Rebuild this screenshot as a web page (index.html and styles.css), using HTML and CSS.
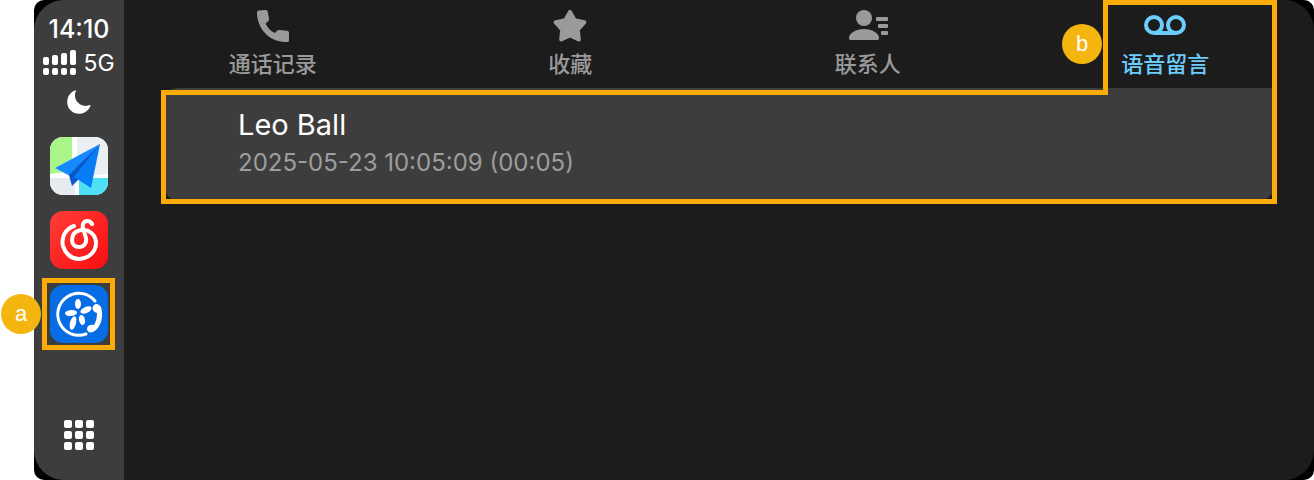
FILE: index.html
```html
<!DOCTYPE html>
<html lang="zh-CN">
<head>
    <meta charset="UTF-8">
    <meta name="viewport" content="width=device-width, initial-scale=1.0">
    <title>语音留言</title>
    <link rel="stylesheet" href="styles.css">
</head>
<body>

<div class="device">
    <!-- Status and app dock -->
    <aside class="sidebar">
        <div class="time">14:10</div>
        <div class="signal">
            <svg width="34" height="26" viewBox="0 0 34 26" fill="#fff" aria-hidden="true">
                <rect x="0" y="7" width="6" height="8" rx="2"/>
                <rect x="9" y="5" width="6" height="10" rx="2"/>
                <rect x="18" y="3" width="6" height="12" rx="2"/>
                <rect x="27" y="0" width="6" height="15" rx="2"/>
                <rect x="0" y="18" width="6" height="7" rx="2"/>
                <rect x="9" y="18" width="6" height="7" rx="2"/>
                <rect x="18" y="18" width="6" height="7" rx="2"/>
                <rect x="27" y="18" width="6" height="7" rx="2"/>
            </svg>
            <span>5G</span>
        </div>
        <svg class="moon" width="24" height="24" viewBox="0 0 24 24" aria-hidden="true">
            <path d="M8.5 .3C3.500 2 .2 6.500 .2 12c0 6.600 5.200 11.800 11.800 11.800 5.300 0 10-3.300 11.500-8.300.1-.5-.2-.7-.6-.4-6 2.600-14.300-1.500-14.900-8.600C7.800 4.300 8.200 2.500 9 .8c.2-.4-.1-.6-.5-.5z" fill="#fff"/>
        </svg>

        <nav class="dock">
            <button class="app" aria-label="地图">
                <svg width="58" height="58" viewBox="0 0 58 58">
                    <rect width="58" height="58" fill="#fff"/>
                    <path d="M0 0h22v34L0 37z" fill="#a9f587"/>
                    <path d="M27 0h31v37L27 40z" fill="#e9eff2"/>
                    <path d="M0 41h25v17H0z" fill="#e6ebf1"/>
                    <path d="M29 41h29v17H29z" fill="#4ee0f5"/>
                    <path d="M50 7L5 31l15 8z" fill="#168bff"/>
                    <path d="M50 7L19 38l3 11 7-7z" fill="#0b56c9"/>
                    <path d="M50 7L24 40l17 11z" fill="#087cf5"/>
                </svg>
            </button>
            <button class="app" aria-label="音乐">
                <svg width="58" height="58" viewBox="0 0 58 58">
                    <defs>
                        <linearGradient id="red" x1="0" y1="0" x2="1" y2="1">
                            <stop offset="0" stop-color="#ff3d37"/>
                            <stop offset="1" stop-color="#f90d10"/>
                        </linearGradient>
                    </defs>
                    <rect width="58" height="58" fill="url(#red)"/>
                    <path d="M24 15C15 18 11 27 13 35c2 7 8 13 16 13 9 0 17-7 17-16 0-9-8-14-15-13-6 1-9 5-9 10 0 4 3 7 7 7 5 0 8-4 7-9l-3-10c-1-4 1-7 4-7 2 0 4 1 5 3" fill="none" stroke="#fff" stroke-width="4" stroke-linecap="round" stroke-linejoin="round"/>
                </svg>
            </button>
            <div class="app-current">
                <button class="app" aria-label="电话">
                    <svg width="58" height="58" viewBox="0 0 58 58">
                        <rect width="58" height="58" fill="#066de5"/>
                        <path d="M45 16A21 21 0 1 0 36 49" fill="none" stroke="#fff" stroke-width="3" stroke-linecap="round"/>
                        <g fill="#fff">
                            <ellipse cx="28" cy="19" rx="3" ry="5"/>
                            <ellipse cx="21" cy="28" rx="6" ry="3" transform="rotate(-5 21 28)"/>
                            <ellipse cx="36" cy="25" rx="6" ry="3" transform="rotate(-25 36 25)"/>
                            <ellipse cx="23" cy="38" rx="3" ry="7" transform="rotate(14 23 38)"/>
                            <ellipse cx="32" cy="35" rx="3" ry="5" transform="rotate(-12 32 35)"/>
                            <path d="M44 20c2-2 5-1 7 2 3 9 0 21-8 25-3 1-6 0-6-3 0-3 3-5 7-4 2-4 3-7 3-12-4-1-6-5-3-8z"/>
                        </g>
                    </svg>
                </button>
                <span class="marker marker-a">a</span>
            </div>
        </nav>

        <button class="home" aria-label="主屏幕">
            <svg width="30" height="30" viewBox="0 0 30 30" fill="#fff">
                <rect x="0" y="0" width="8" height="8" rx="2"/>
                <rect x="11" y="0" width="8" height="8" rx="2"/>
                <rect x="22" y="0" width="8" height="8" rx="2"/>
                <rect x="0" y="11" width="8" height="8" rx="2"/>
                <rect x="11" y="11" width="8" height="8" rx="2"/>
                <rect x="22" y="11" width="8" height="8" rx="2"/>
                <rect x="0" y="22" width="8" height="8" rx="2"/>
                <rect x="11" y="22" width="8" height="8" rx="2"/>
                <rect x="22" y="22" width="8" height="8" rx="2"/>
            </svg>
        </button>
    </aside>

    <main class="content">
        <nav class="tabs">
            <button class="tab">
                <svg width="32" height="32" viewBox="0 0 32 32" fill="currentColor">
                    <path d="M2 .5L8.500 0c1.300 0 2 .6 2.300 1.700L12 9c.1 1-.2 1.800-1 2.400L8.500 13.500c1.800 4 5 7.300 9.200 9.500l2.500-2.300c.7-.7 1.500-.9 2.400-.7l7.500 .8c1.200.2 1.900 1 1.900 2.200v7.200c0 1.300-.8 1.800-2 1.800C13 32.500 0 19 0 2.500 0 1.300 .7 .6 2 .5z"/>
                </svg>
                <span>通话记录</span>
            </button>
            <button class="tab">
                <svg width="34" height="32" viewBox="0 0 34 32" fill="currentColor" stroke="currentColor" stroke-width="4" stroke-linejoin="round">
                    <path d="M17 2l4.700 8.300 9.600 2-6.500 7.300 1 9.900L17 25.400l-8.800 4.100 1-9.900-6.500-7.300 9.600-2z"/>
                </svg>
                <span>收藏</span>
            </button>
            <button class="tab">
                <svg width="40" height="32" viewBox="0 0 40 32" fill="currentColor">
                    <circle cx="16" cy="8" r="8"/>
                    <path d="M1 28c0-5 7-9 15-9s15 4 15 9c0 1.500-.6 2-2 2H3c-1.400 0-2-.5-2-2z"/>
                    <rect x="28" y="7" width="12" height="4" rx="1"/>
                    <rect x="30" y="14" width="10" height="4" rx="1"/>
                    <rect x="33" y="21" width="7" height="4" rx="1"/>
                </svg>
                <span>联系人</span>
            </button>
            <button class="tab active">
                <svg width="42" height="32" viewBox="0 0 42 32" fill="none" stroke="currentColor" stroke-width="4">
                    <circle cx="10" cy="15" r="8"/>
                    <circle cx="32" cy="15" r="8"/>
                    <path d="M10 23h22"/>
                </svg>
                <span>语音留言</span>
            </button>
        </nav>

        <ul class="messages">
            <li class="message">
                <div class="name">Leo Ball</div>
                <div class="date">2025-05-23 10:05:09 (00:05)</div>
            </li>
        </ul>

        <!-- Outline around the voicemail tab and its list -->
        <div class="outline-tab"></div>
        <div class="outline-list"></div>
        <span class="marker marker-b">b</span>
    </main>
</div>

</body>
</html>
```
FILE: styles.css
```css
* {
    box-sizing: border-box;
}

body {
    margin: 0;
    background-color: #fff;
    font-family: Inter, "Noto Sans CJK SC", sans-serif;
}

button {
    padding: 0;
    border: none;
    background: none;
    color: inherit;
    font: inherit;
    cursor: pointer;
}

svg {
    display: block;
}

.device {
    display: flex;
    min-height: 100vh;
    margin-left: 34px;
    background-color: #000;
    border-radius: 10px;
}

/* Sidebar */
.sidebar {
    display: flex;
    flex-direction: column;
    align-items: center;
    width: 90px;
    padding: 14px 0 30px;
    background-color: #3d3d3d;
    border-radius: 30px 0 0 30px;
    color: #fff;
}

.time {
    font-size: 25px;
    font-weight: 500;
    line-height: 30px;
}

.signal {
    display: flex;
    align-items: center;
    gap: 6px;
    height: 26px;
    margin-top: 6px;
    font-size: 23px;
}

.moon {
    margin-top: 14px;
}

.dock {
    display: flex;
    flex-direction: column;
    gap: 16px;
    margin-top: 23px;
}

.app {
    display: block;
    width: 58px;
    height: 58px;
    border-radius: 13px;
    overflow: hidden;
}

.app-current {
    position: relative;
}

.app-current::after {
    content: "";
    position: absolute;
    inset: -7px -7px -7px -8px;
    border: 5px solid #fcab07;
    pointer-events: none;
}

.home {
    margin-top: auto;
}

/* Main area */
.content {
    position: relative;
    flex: 1;
    background-color: #1c1c1c;
    border-radius: 0 30px 30px 0;
}

.tabs {
    display: grid;
    grid-template-columns: repeat(4, 1fr);
    height: 88px;
}

.tab {
    display: flex;
    flex-direction: column;
    align-items: center;
    gap: 6px;
    padding-top: 10px;
    color: #9a9a9a;
    font-size: 22px;
    font-weight: 500;
    line-height: 32px;
}

.tab.active {
    color: #6bcdfb;
}

.messages {
    margin: 0 40px;
    padding: 0;
    list-style: none;
}

.message {
    padding: 18px 74px;
    background-color: #3d3d3d;
    border-radius: 14px 0 14px 14px;
}

.name {
    color: #fff;
    font-size: 29px;
    line-height: 38px;
}

.date {
    color: #9d9d9d;
    font-size: 24px;
    line-height: 38px;
}

/* Callouts */
.outline-tab,
.outline-list {
    position: absolute;
    right: 37px;
    border: 5px solid #fcab07;
    pointer-events: none;
}

.outline-tab {
    top: 0;
    width: 174px;
    height: 95px;
    border-bottom: none;
}

.outline-list {
    top: 90px;
    left: 37px;
    height: 114px;
    border-top: none;
}

.outline-list::before {
    content: "";
    position: absolute;
    top: 0;
    left: 0;
    right: 164px;
    height: 5px;
    background-color: #fcab07;
}

.marker {
    position: absolute;
    width: 40px;
    height: 40px;
    border-radius: 50%;
    background-color: #f5b50f;
    color: #fff;
    font-family: "Liberation Sans", Arial, sans-serif;
    font-size: 22px;
    line-height: 40px;
    text-align: center;
}

.marker-a {
    top: 9px;
    left: -49px;
}

.marker-b {
    top: 24px;
    right: 212px;
}
```
